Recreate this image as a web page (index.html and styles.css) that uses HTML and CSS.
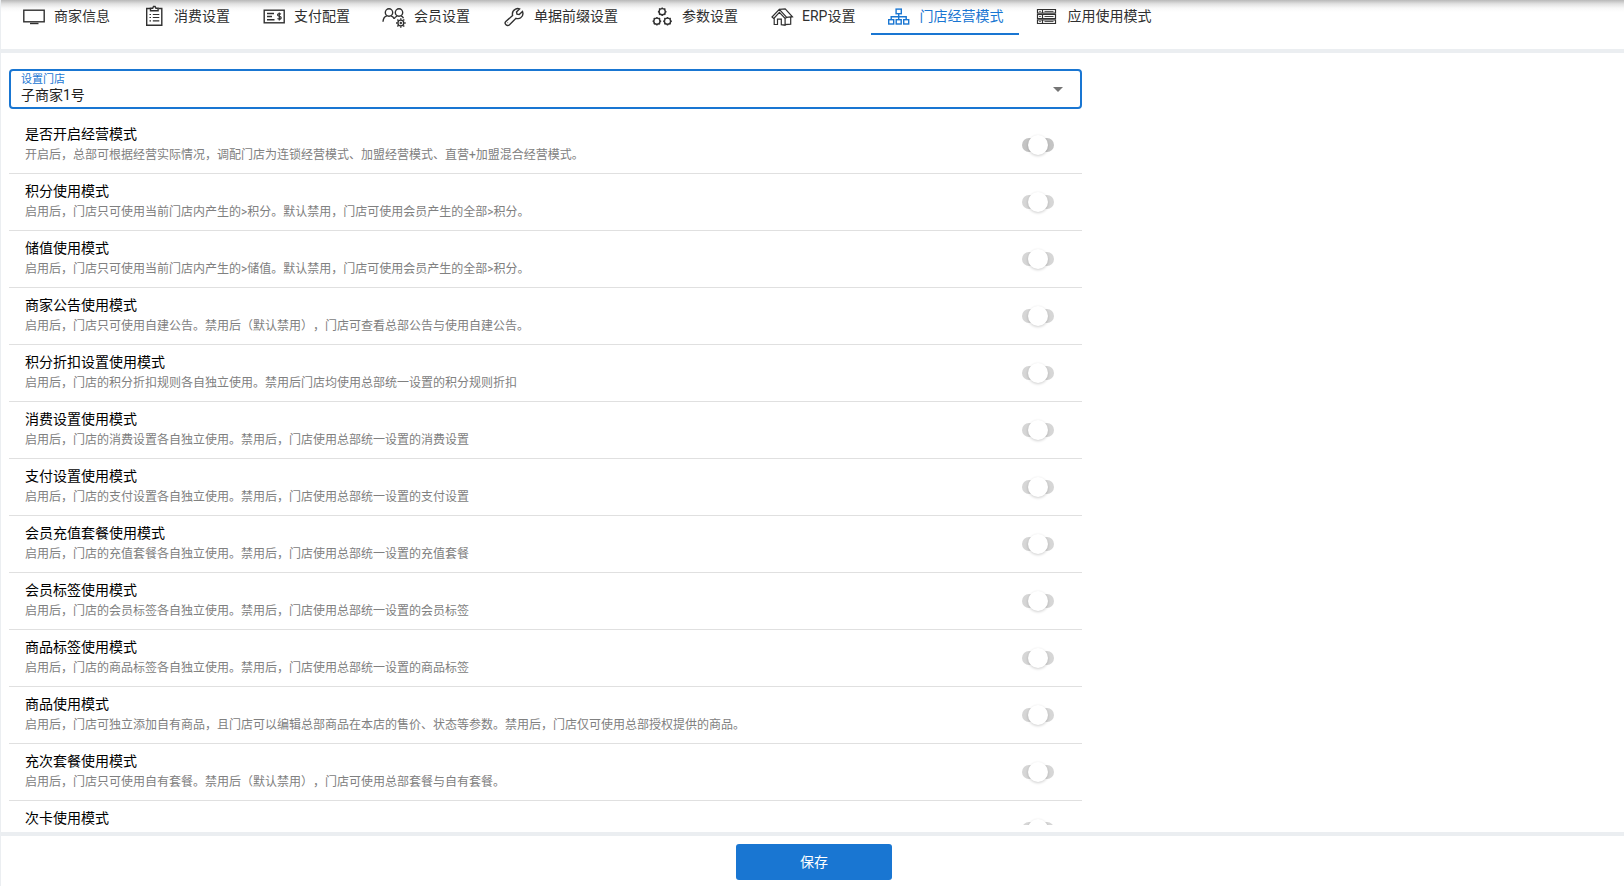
FILE: index.html
```html
<!DOCTYPE html>
<html lang="zh-CN">
<head>
<meta charset="utf-8">
<title>门店经营模式</title>
<link rel="stylesheet" href="styles.css">
</head>
<body>
<div class="page">
  <nav class="tabs">
    <a class="tab" href="#"><svg class="icon" viewBox="0 0 24 24"><rect x="1.8" y="6.200" width="20.4" height="11.6"/><path d="M8 19.500h8.500"/></svg>商家信息</a>
    <a class="tab" href="#"><svg class="icon" viewBox="0 0 24 24"><path d="M8 4.500H4.700v16.800h15.100V4.500h-3.300"/><path d="M8.500 6.800V4.200h2.200l.8-1.700h1.600l.8 1.700h2.200v2.600z"/><path class="thin" d="M7.500 10.500h1.500M10.800 10.500h6.500M7.500 13.500h1.500M10.800 13.500h6.500M7.500 16.800h1.500M10.800 16.800h6.500"/></svg>消费设置</a>
    <a class="tab" href="#"><svg class="icon" viewBox="0 0 24 24"><rect x="2.200" y="6.200" width="20" height="12.600"/><path d="M5 9.500h7M5 12.500h5M5 15.800h7.500"/><path class="thin" d="M19 10.200c-2-1.500-4-.2-3.200 1.300.6 1 2.600.6 3.200 1.800.7 1.600-1.600 2.700-3.500 1.300M17.300 8.500v8"/></svg>支付配置</a>
    <a class="tab" href="#"><svg class="icon" viewBox="0 0 24 24"><circle cx="7" cy="8.500" r="3.700"/><path d="M1 17.700c.2-3 1.500-5.200 4-5.800M9 11.900c1.500.5 2.600 1.400 3.200 2.900"/><circle cx="17" cy="8.500" r="3.700"/><path d="M12.200 14.800c.6-1.500 1.600-2.300 3-2.700M19 11.900c1.200.5 2 1.300 2.500 2.300"/><circle cx="18.800" cy="19" r="2.900"/><circle cx="18.800" cy="19" r=".5"/><path d="M18.800 14.300v1.500M18.800 22.300v1.500M14 19h1.500M22.200 19h1.500M15.400 15.600l1.100 1.100M21.200 21.400l1.100 1.100M15.400 22.400l1.100-1.100M21.200 16.600l1.100-1.100"/></svg>会员设置</a>
    <a class="tab" href="#"><svg class="icon" viewBox="0 0 24 24"><path d="M3.600 20.300c-.8-.9-.6-1.900.2-2.700l6.800-6.200c-.6-2.700.6-5.200 2.900-6.300 1.300-.6 2.700-.7 4-.2l-3 3 .5 2.200 2.200.5 3.300-3.200c.9 2.500.2 5-1.800 6.400-1.300.9-3 1-4.700.5l-6.500 6.400c-1.300 1.200-2.900 1-3.900-.4z"/><path d="M5.500 18.500l.3.300"/></svg>单据前缀设置</a>
    <a class="tab" href="#"><svg class="icon" viewBox="0 0 24 24"><g><circle cx="12.200" cy="7.700" r="3.100"/><path d="M12.200 3.400v1.300M12.200 10.700v1.300M7.900 7.700h1.300M15.200 7.700h1.300M9.100 4.600l.9.900M14.400 9.900l.9.900M9.100 10.800l.9-.9M14.400 5.500l.9-.9"/></g><g><circle cx="6.900" cy="17.200" r="3.100"/><path d="M6.900 12.900v1.300M6.900 20.200v1.300M2.600 17.200h1.300M9.900 17.200h1.300M3.800 14.100l.9.900M9.100 19.400l.9.900M3.800 20.300l.9-.9M9.100 15l.9-.9"/></g><g><circle cx="17.500" cy="17.200" r="3.100"/><path d="M17.500 12.900v1.300M17.500 20.200v1.300M13.200 17.200h1.300M20.500 17.200h1.300M14.400 14.100l.9.900M19.700 19.400l.9.900M14.400 20.300l.9-.9M19.700 15l.9-.9"/></g></svg>参数设置</a>
    <a class="tab" href="#"><svg class="icon" viewBox="0 0 24 24"><path class="thin" d="M3.800 14.500L2 13l7.300-7.700 7.400 8-1.600 1.200-5.700-6.200-5.200 5.700v6.500h3.300v-5.300h3.800v5.500l3.800.5v-6.700M9.300 5.300l5.900-.5 7.300 8-1.800.3v7l-5.900.6M16.700 13.300l5.600-.6"/></svg>ERP设置</a>
    <a class="tab tab-active" href="#" aria-current="page"><svg class="icon" viewBox="0 0 24 24"><rect x="9.100" y="5.100" width="5.200" height="4.600"/><rect x="1.700" y="15.700" width="5" height="4.300"/><rect x="9.200" y="15.700" width="5" height="4.300"/><rect x="16.700" y="15.700" width="5" height="4.300"/><path d="M11.700 9.700v6M4.200 15.700v-3h15v3"/></svg>门店经营模式</a>
    <a class="tab" href="#"><svg class="icon" viewBox="0 0 24 24"><path class="thin" d="M2.500 5.500h18v3.700h-18zM2.500 10.500h18v4h-18zM2.500 15.800h18v3.700h-18zM7.500 5.500v3.700M7.500 10.500v4M7.500 15.800v3.700"/><path class="fine" d="M4.200 7.400h1.600M4.200 12.500h1.600M4.200 17.600h1.600M9.500 7.400h9M9.500 12.500h9M9.500 17.600h9"/></svg>应用使用模式</a>
  </nav>

  <main class="main">
    <div class="column">
      <div class="field">
        <div class="field-body">
          <label class="field-label" for="store">设置门店</label>
          <select class="field-select" id="store"><option>子商家1号</option></select>
        </div>
        <svg class="caret" viewBox="0 0 10 5"><path d="M0 0h10L5 5z"/></svg>
      </div>
      <div class="list">
        <label class="row"><span class="row-text"><span class="title">是否开启经营模式</span><span class="desc">开启后，总部可根据经营实际情况，调配门店为连锁经营模式、加盟经营模式、直营+加盟混合经营模式。</span></span><input class="toggle toggle-main" type="checkbox"></label>
        <label class="row"><span class="row-text"><span class="title">积分使用模式</span><span class="desc">启用后，门店只可使用当前门店内产生的&gt;积分。默认禁用，门店可使用会员产生的全部&gt;积分。</span></span><input class="toggle" type="checkbox"></label>
        <label class="row"><span class="row-text"><span class="title">储值使用模式</span><span class="desc">启用后，门店只可使用当前门店内产生的&gt;储值。默认禁用，门店可使用会员产生的全部&gt;积分。</span></span><input class="toggle" type="checkbox"></label>
        <label class="row"><span class="row-text"><span class="title">商家公告使用模式</span><span class="desc">启用后，门店只可使用自建公告。禁用后（默认禁用），门店可查看总部公告与使用自建公告。</span></span><input class="toggle" type="checkbox"></label>
        <label class="row"><span class="row-text"><span class="title">积分折扣设置使用模式</span><span class="desc">启用后，门店的积分折扣规则各自独立使用。禁用后门店均使用总部统一设置的积分规则折扣</span></span><input class="toggle" type="checkbox"></label>
        <label class="row"><span class="row-text"><span class="title">消费设置使用模式</span><span class="desc">启用后，门店的消费设置各自独立使用。禁用后，门店使用总部统一设置的消费设置</span></span><input class="toggle" type="checkbox"></label>
        <label class="row"><span class="row-text"><span class="title">支付设置使用模式</span><span class="desc">启用后，门店的支付设置各自独立使用。禁用后，门店使用总部统一设置的支付设置</span></span><input class="toggle" type="checkbox"></label>
        <label class="row"><span class="row-text"><span class="title">会员充值套餐使用模式</span><span class="desc">启用后，门店的充值套餐各自独立使用。禁用后，门店使用总部统一设置的充值套餐</span></span><input class="toggle" type="checkbox"></label>
        <label class="row"><span class="row-text"><span class="title">会员标签使用模式</span><span class="desc">启用后，门店的会员标签各自独立使用。禁用后，门店使用总部统一设置的会员标签</span></span><input class="toggle" type="checkbox"></label>
        <label class="row"><span class="row-text"><span class="title">商品标签使用模式</span><span class="desc">启用后，门店的商品标签各自独立使用。禁用后，门店使用总部统一设置的商品标签</span></span><input class="toggle" type="checkbox"></label>
        <label class="row"><span class="row-text"><span class="title">商品使用模式</span><span class="desc">启用后，门店可独立添加自有商品，且门店可以编辑总部商品在本店的售价、状态等参数。禁用后，门店仅可使用总部授权提供的商品。</span></span><input class="toggle" type="checkbox"></label>
        <label class="row"><span class="row-text"><span class="title">充次套餐使用模式</span><span class="desc">启用后，门店只可使用自有套餐。禁用后（默认禁用），门店可使用总部套餐与自有套餐。</span></span><input class="toggle" type="checkbox"></label>
        <label class="row"><span class="row-text"><span class="title">次卡使用模式</span></span><input class="toggle" type="checkbox"></label>
      </div>
    </div>
  </main>

  <footer class="footer"><button class="save" type="button">保存</button></footer>
</div>
</body>
</html>
```
FILE: styles.css
```css
* { box-sizing: border-box; }

body {
  margin: 0;
  background: #fff;
  color: #212121;
  font-family: Roboto, "Noto Sans CJK SC", sans-serif;
  font-size: 14px;
  text-spacing-trim: space-all;
}

.page {
  display: flex;
  flex-direction: column;
  height: 100vh;
  border-left: 1px solid #ebeef1;
}

.tabs {
  display: flex;
  padding: 0 5px 14px;
  border-bottom: 4px solid #ebeef1;
  background: linear-gradient(#b8b8b8, #e2e2e2 4px, #f8f8f8 8px, #fff 12px);
}

.tab {
  display: flex;
  align-items: center;
  gap: 8px;
  height: 35px;
  padding: 0 16px 2px;
  border-bottom: 2px solid transparent;
  color: #303030;
  line-height: 20px;
  text-decoration: none;
  white-space: nowrap;
}

.tab-active {
  border-bottom-color: #1976d2;
  color: #1976d2;
}

.icon {
  width: 24px;
  height: 24px;
  fill: none;
  stroke: currentColor;
  stroke-width: 1.4;
}

.icon .thin { stroke-width: 1.2; }
.icon .fine { stroke-width: 0.9; }

.main {
  flex: 1;
  display: flex;
  min-height: 0;
  padding: 16px 5px 7px 8px;
}

.column {
  display: flex;
  flex-direction: column;
  width: calc(100% * 2 / 3);
  min-height: 0;
}

.field {
  display: flex;
  align-items: center;
  flex-shrink: 0;
  height: 40px;
  margin-bottom: 8px;
  padding: 0 17px 0 10px;
  border: 2px solid #1976d2;
  border-radius: 4px;
}

.field-body {
  flex: 1;
  display: flex;
  flex-direction: column;
  padding-bottom: 3px;
}

.field-label {
  color: #1976d2;
  font-size: 11px;
  line-height: 14px;
}

.field-select {
  appearance: none;
  width: 100%;
  height: 16px;
  padding: 0;
  border: 0;
  outline: 0;
  background: transparent;
  color: #212121;
  font: inherit;
  line-height: 16px;
}

.caret {
  width: 10px;
  height: 5px;
  fill: #757575;
}

.list {
  flex: 1;
  min-height: 0;
  overflow-y: auto;
  scrollbar-width: none;
}

.row {
  display: flex;
  align-items: center;
  justify-content: space-between;
  min-height: 57px;
  padding: 8px 28px 8px 16px;
  border-bottom: 1px solid #e0e0e0;
}

.row-text {
  display: flex;
  flex-direction: column;
  align-self: flex-start;
  gap: 2px;
}

.title {
  color: #000;
  line-height: 18px;
}

.desc {
  color: #808080;
  font-size: 12px;
  line-height: 20px;
}

.toggle {
  appearance: none;
  display: flex;
  align-items: center;
  justify-content: center;
  flex-shrink: 0;
  width: 32px;
  height: 14px;
  margin: 0;
  border-radius: 7px;
  background: #d6d6d6;
}

.toggle-main { background: #c4c4c4; }

.toggle::before {
  content: "";
  flex-shrink: 0;
  width: 20px;
  height: 20px;
  border-radius: 50%;
  background: #fff;
  box-shadow: 0 1px 3px rgba(0, 0, 0, 0.2);
}

.footer {
  display: flex;
  justify-content: center;
  padding: 8px 0 6px 3px;
  border-top: 4px solid #ebeef1;
}

.save {
  width: 156px;
  height: 36px;
  padding: 0 0 3px;
  border: 0;
  border-radius: 3px;
  background: #1976d2;
  color: #fff;
  font: inherit;
}
```
